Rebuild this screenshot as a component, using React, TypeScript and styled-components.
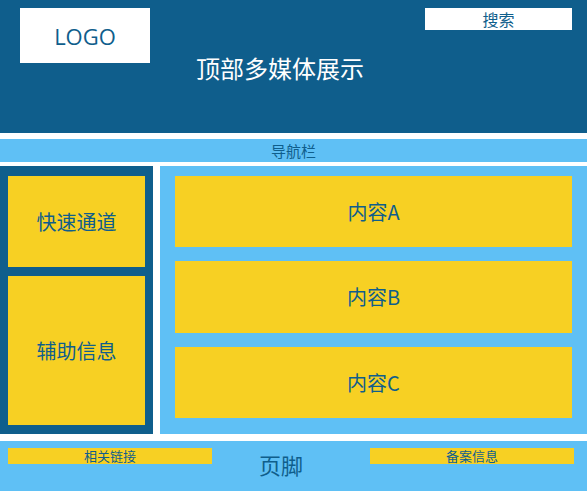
import styled, { createGlobalStyle } from "styled-components";

const Global = createGlobalStyle`
  body { margin: 0; background: #ffffff; font-family: "Noto Sans CJK SC", "Open Sans", sans-serif; }
`;

const dark = "#0f5e8c";
const light = "#5fc0f5";
const yellow = "#f7d023";

const Page = styled.div`
  width: 587px;
  height: 491px;
  display: flex;
  flex-direction: column;
`;

const Header = styled.header`
  height: 133px;
  background: ${dark};
  display: grid;
  grid-template-columns: 150px 1fr 167px;
  padding: 8px 15px 0 20px;
  box-sizing: border-box;
`;

const Logo = styled.div`
  width: 130px;
  height: 55px;
  background: #fff;
  color: ${dark};
  font-size: 22px;
  display: flex;
  align-items: center;
  justify-content: center;
  font-family: "Open Sans", sans-serif;
`;

const Title = styled.div`
  color: #fff;
  font-size: 24px;
  text-align: center;
  padding-top: 42px;
  margin-left: -15px;
`;

const Search = styled.div`
  margin-left: 20px;
  height: 22px;
  background: #fff;
  color: ${dark};
  font-size: 16px;
  line-height: 22px;
  text-align: center;
  padding-left: 0;
`;

const Nav = styled.nav`
  margin-top: 6px;
  height: 23px;
  background: ${light};
  color: ${dark};
  font-size: 15px;
  line-height: 23px;
  text-align: center;
`;

const Main = styled.main`
  margin-top: 4px;
  height: 268px;
  display: flex;
  gap: 7px;
`;

const Side = styled.aside`
  width: 153px;
  background: ${dark};
  padding: 10px 8px 9px;
  box-sizing: border-box;
  display: flex;
  flex-direction: column;
  gap: 9px;
`;

const Box = styled.div<{ $grow: number }>`
  flex: ${(p) => p.$grow};
  background: ${yellow};
  color: ${dark};
  font-size: 20px;
  display: flex;
  align-items: center;
  justify-content: center;
`;

const Content = styled.section`
  flex: 1;
  background: ${light};
  padding: 10px 15px 16px;
  display: flex;
  flex-direction: column;
  gap: 14px;
`;

const Footer = styled.footer`
  margin-top: 7px;
  flex: 1;
  background: ${light};
  display: grid;
  grid-template-columns: 204px 1fr 204px;
  padding: 7px 13px 0 8px;
  box-sizing: border-box;
`;

const FootLink = styled.div`
  height: 16px;
  background: ${yellow};
  color: ${dark};
  font-size: 13px;
  line-height: 16px;
  text-align: center;
`;

const FootTitle = styled.div`
  color: ${dark};
  font-size: 22px;
  text-align: center;
  line-height: 32px;
  margin-left: -20px;
`;

export default function App() {
  return (
    <Page>
      <Global />
      <Header>
        <Logo>LOGO</Logo>
        <Title>顶部多媒体展示</Title>
        <Search>搜索</Search>
      </Header>
      <Nav>导航栏</Nav>
      <Main>
        <Side>
          <Box $grow={91}>快速通道</Box>
          <Box $grow={149}>辅助信息</Box>
        </Side>
        <Content>
          <Box $grow={1}>内容A</Box>
          <Box $grow={1}>内容B</Box>
          <Box $grow={1}>内容C</Box>
        </Content>
      </Main>
      <Footer>
        <FootLink>相关链接</FootLink>
        <FootTitle>页脚</FootTitle>
        <FootLink>备案信息</FootLink>
      </Footer>
    </Page>
  );
}
